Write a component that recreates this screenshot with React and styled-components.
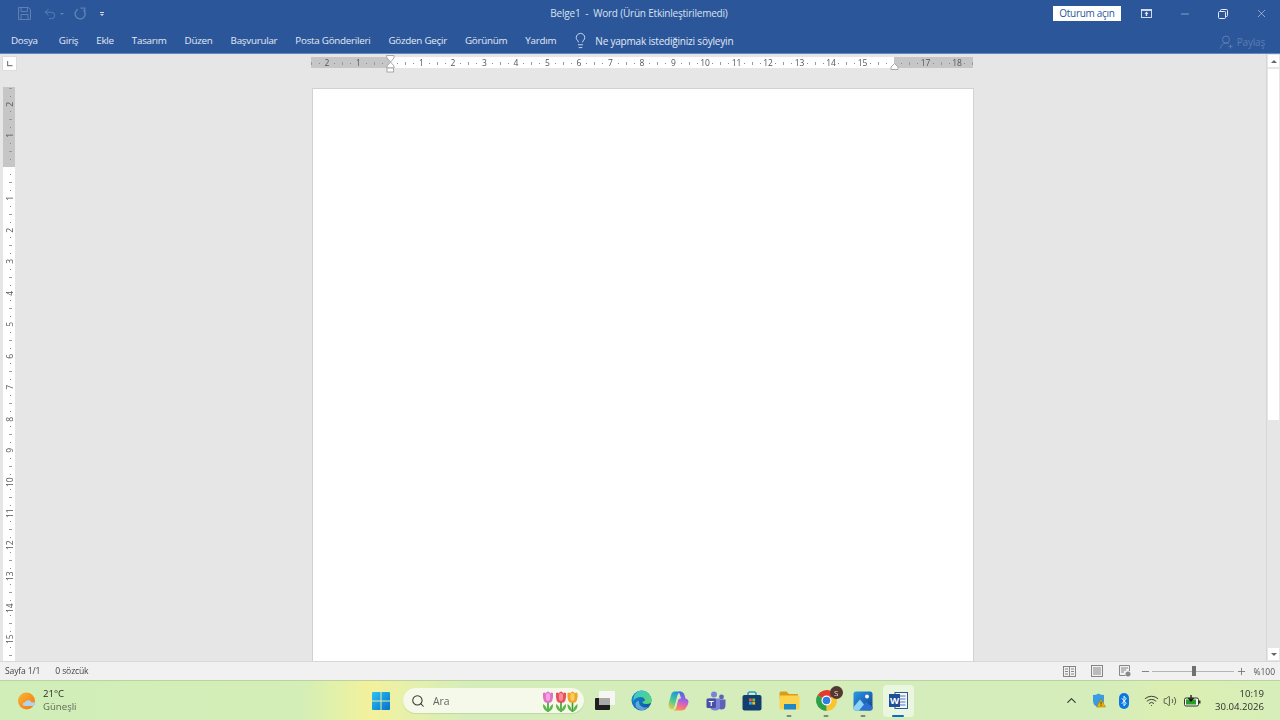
import React from "react";
import styled, { createGlobalStyle } from "styled-components";
import { ChevronUp, Lightbulb, Minus, Plus, Search, Undo2, Volume2, Wifi, X } from "lucide-react";

const GlobalStyle = createGlobalStyle`
  html, body {
    margin: 0;
    padding: 0;
    background: #e6e6e6;
  }
  * {
    box-sizing: border-box;
  }
`;

const STEP = 7.875;

const Screen = styled.div`
  width: 1280px;
  height: 720px;
  display: flex;
  flex-direction: column;
  overflow: hidden;
  font-family: "Open Sans", "Noto Sans", sans-serif;
  filter: blur(0.3px);
`;

const TitleBar = styled.div`
  height: 27px;
  flex: none;
  background: #2b579a;
  display: grid;
  grid-template-columns: 1fr auto 1fr;
  align-items: center;
  color: #dfe7f3;
`;

const QuickAccess = styled.div`
  display: flex;
  align-items: center;
  padding-left: 18px;
  color: #5f80b3;
`;

const QuickButton = styled.span`
  display: flex;
  margin-right: ${(p) => p.$gap || 0}px;
`;

const Caret = styled.span`
  width: 0;
  height: 0;
  border-left: 2px solid transparent;
  border-right: 2px solid transparent;
  border-top: 2px solid ${(p) => p.$color || "#6283b5"};
`;

const CustomizeMark = styled.span`
  width: 4px;
  display: flex;
  flex-direction: column;
  gap: 1px;
  align-items: center;

  &::before {
    content: "";
    width: 4px;
    height: 1px;
    background: #d4dcea;
  }
`;

const DocTitle = styled.div`
  font-size: 10px;
  letter-spacing: -0.2px;
  white-space: pre;
  color: #d9e1ef;
  margin: -1px 0 0 -2px;
`;

const WindowControls = styled.div`
  display: flex;
  align-items: center;
  justify-content: flex-end;
`;

const SignIn = styled.button`
  width: 68px;
  height: 15px;
  margin-right: 20px;
  padding: 0;
  border: 0;
  background: #fff;
  color: #2b579a;
  font: 10px "Open Sans", sans-serif;
  letter-spacing: -0.3px;
  line-height: 15px;
`;

const WindowButton = styled.span`
  width: ${(p) => p.$w}px;
  margin-left: ${(p) => p.$before || 0}px;
  display: flex;
  justify-content: center;
  color: #e4eaf4;
`;

const TabBar = styled.div`
  height: 27px;
  flex: none;
  background: #2b579a;
  border-bottom: 1px solid #6488bd;
  display: flex;
  align-items: center;
  gap: 18px;
  padding: 1px 15px 0 11px;
`;

const Tab = styled.span`
  font-size: 9.8px;
  letter-spacing: -0.25px;
  color: #e3e9f4;
  white-space: nowrap;
  margin-right: ${(p) => p.$after || 0}px;
`;

const TellMe = styled.div`
  display: flex;
  align-items: center;
  gap: 6px;
  color: #e3e9f4;
  font-size: 10px;
  letter-spacing: -0.2px;
  margin-left: -2px;
`;

const Share = styled.div`
  margin-left: auto;
  display: flex;
  align-items: center;
  gap: 3px;
  color: #5a7cb0;
  font-size: 10px;
  letter-spacing: -0.2px;
  padding-top: 3px;
`;

const Workspace = styled.div`
  flex: 1;
  min-height: 0;
  display: flex;
  background: #e6e6e6;
`;

const LeftColumn = styled.div`
  width: 18px;
  flex: none;
  padding-left: 3px;
`;

const Corner = styled.div`
  width: 13px;
  height: 13px;
  margin-top: 3px;
  background: #fff;
  box-shadow: 0 0 0 1px #dcdcdc;
  display: flex;
  align-items: center;
  justify-content: center;
`;

const Center = styled.div`
  flex: 1;
  min-width: 0;
  display: flex;
  flex-direction: column;
  align-items: center;
`;

const Ruler = styled.div`
  position: relative;
  flex: none;
  width: ${(p) => (p.$vertical ? "12px" : "662px")};
  height: ${(p) => (p.$vertical ? "574px" : "11px")};
  margin-top: ${(p) => (p.$vertical ? "17px" : "3px")};
  overflow: ${(p) => (p.$vertical ? "hidden" : "visible")};
  background: ${(p) =>
    p.$vertical
      ? "linear-gradient(to bottom, #c6c6c6 80px, #fff 80px)"
      : "linear-gradient(to right, #c6c6c6 79px, #fff 79px, #fff 583px, #c6c6c6 583px)"};
`;

const RulerClip = styled.div`
  width: 100%;
  height: 100%;
  overflow: hidden;
`;

const Scale = styled.div`
  display: flex;
  flex-direction: ${(p) => (p.$vertical ? "column" : "row")};
  margin-left: ${(p) => (p.$vertical ? "1px" : "-3.69px")};
  margin-top: ${(p) => (p.$vertical ? "-2.69px" : "1px")};
  width: ${(p) => (p.$vertical ? "12px" : "auto")};
  height: ${(p) => (p.$vertical ? "auto" : "11px")};
`;

const Slot = styled.div`
  flex: none;
  width: ${(p) => (p.$vertical ? "12px" : `${STEP}px`)};
  height: ${(p) => (p.$vertical ? `${STEP}px` : "11px")};
  display: flex;
  align-items: center;
  justify-content: center;
`;

const Dot = styled.i`
  width: 1px;
  height: 1px;
  background: #8b8b8b;
`;

const Tick = styled.i`
  width: ${(p) => (p.$vertical ? "3px" : "1px")};
  height: ${(p) => (p.$vertical ? "1px" : "3px")};
  background: #9a9a9a;
`;

const Num = styled.span`
  font-size: 8.5px;
  line-height: 1;
  color: #555;
  white-space: nowrap;
  transform: ${(p) => (p.$vertical ? "rotate(-90deg)" : "none")};
`;

const IndentMark = styled.svg`
  position: absolute;
  left: ${(p) => p.$left}px;
  top: ${(p) => p.$top}px;
`;

const Page = styled.div`
  flex: 1;
  width: 662px;
  margin: 20px 0 0 2px;
  background: #fff;
  border: 1px solid #d2d2d2;
  border-bottom: 0;
`;

const ScrollBar = styled.div`
  width: 14px;
  flex: none;
  padding: 1px;
  display: flex;
  flex-direction: column;
  border-left: 1px solid #d6d6d6;
`;

const ScrollArrow = styled.div`
  height: 12px;
  flex: none;
  background: #fff;
  display: flex;
  align-items: center;
  justify-content: center;

  &::before {
    content: "";
    border-left: 3.5px solid transparent;
    border-right: 3.5px solid transparent;
    border-${(p) => (p.$down ? "top" : "bottom")}: 3.5px solid #666;
  }
`;

const ScrollThumb = styled.div`
  height: 351px;
  margin-top: 2px;
  flex: none;
  background: #fff;
`;

const ScrollSpace = styled.div`
  flex: 1;
`;

const StatusBar = styled.div`
  height: 19px;
  flex: none;
  background: #f1f1f1;
  border-top: 1px solid #d8d8d8;
  display: flex;
  align-items: center;
  font-size: 8.6px;
  color: #444;
  padding: 0 5px;
`;

const StatusText = styled.span`
  margin-right: ${(p) => p.$after || 0}px;
  letter-spacing: -0.15px;
  white-space: nowrap;
`;

const StatusRight = styled.div`
  margin-left: auto;
  display: flex;
  align-items: center;
  color: #7a7a7a;
`;

const ViewIcon = styled.span`
  display: flex;
  margin-right: ${(p) => p.$after}px;
`;

const ZoomTrack = styled.div`
  position: relative;
  width: 82px;
  height: 1px;
  margin: 0 2px 0 1px;
  background: #b4b4b4;
`;

const ZoomThumb = styled.span`
  position: absolute;
  left: 40px;
  top: -5px;
  width: 4px;
  height: 10px;
  background: #707070;
`;

const ZoomValue = styled.span`
  font-size: 8.5px;
  margin-left: 6px;
  color: #555;
`;

const Taskbar = styled.div`
  height: 40px;
  flex: none;
  display: grid;
  grid-template-columns: 363px auto 1fr;
  align-items: center;
  border-top: 1px solid #b9d3a2;
  background: linear-gradient(
    to right,
    #d2eeb8 0,
    #d3eeb7 300px,
    #e2f1a9 335px,
    #f3f19c 372px,
    #e6f0ab 410px,
    #d5edbb 470px,
    #d5edbb 1100px,
    #dcefb2 1170px,
    #d6eeb9 1280px
  );
`;

const Weather = styled.div`
  display: flex;
  align-items: center;
  gap: 6px;
  padding-left: 17px;
`;

const WeatherText = styled.div`
  display: flex;
  flex-direction: column;
  font-size: 9.6px;
  line-height: 13px;
  color: #2b2b2b;
  margin-top: -2px;
`;

const WeatherSub = styled.span`
  color: #606a58;
`;

const Apps = styled.div`
  display: flex;
  align-items: center;
`;

const AppSlot = styled.div`
  position: relative;
  width: ${(p) => (p.$active ? "31px" : "36.9px")};
  margin-left: ${(p) => (p.$active ? "1px" : "0")};
  height: 32px;
  flex: none;
  display: flex;
  align-items: center;
  justify-content: center;
  border-radius: 4px;
  background: ${(p) => (p.$active ? "rgba(255,255,255,0.5)" : "transparent")};

  &::after {
    content: "";
    display: ${(p) => (p.$running || p.$active ? "block" : "none")};
    position: absolute;
    bottom: 0;
    left: 50%;
    transform: translateX(-50%);
    width: ${(p) => (p.$active ? "12px" : "5px")};
    height: 2px;
    border-radius: 1px;
    background: ${(p) => (p.$active ? "#0a6cc4" : "#7d8a78")};
  }
`;

const SearchBox = styled.div`
  width: 181px;
  height: 25px;
  margin: 0 2.5px 0 3px;
  flex: none;
  border-radius: 13px;
  background: #f4f9e9;
  box-shadow: 0 1px 1px rgba(90, 110, 70, 0.18);
  display: flex;
  align-items: center;
  padding: 0 4px 0 8px;
  color: #333;
`;

const SearchLabel = styled.span`
  font-size: 10.4px;
  color: #666;
  margin-left: 8px;
`;

const Tulips = styled.svg`
  margin-left: auto;
`;

const Badge = styled.span`
  position: absolute;
  left: 22px;
  top: 1px;
  width: 13px;
  height: 13px;
  border-radius: 50%;
  background: #54372f;
  color: #e8dcd6;
  font-size: 8px;
  line-height: 13px;
  text-align: center;
`;

const Tray = styled.div`
  display: flex;
  align-items: center;
  padding-right: 16px;
  color: #333;
`;

const TrayIcon = styled.span`
  display: flex;
  margin-left: ${(p) => p.$before}px;
`;

const Clock = styled.div`
  margin-left: auto;
  margin-top: -2px;
  display: flex;
  flex-direction: column;
  align-items: flex-end;
  font-size: 9.6px;
  line-height: 13px;
  color: #2f2f2f;
`;

const SaveIcon = () => (
  <svg width="13" height="13" viewBox="0 0 13 13" fill="none" stroke="currentColor">
    <path d="M0.5 0.5 H10.5 L12.5 2.5 V12.5 H0.5 Z" />
    <path d="M3 0.5 V4.5 H9.5 V0.5 M3 12.5 V7.5 H10 V12.5" />
  </svg>
);

const RepeatIcon = () => (
  <svg width="12" height="13" viewBox="0 0 12 13" fill="none" stroke="currentColor" strokeWidth="1.5">
    <path d="M4 2.4 A5 5 0 1 0 9.5 3.2" />
    <path d="M6.5 1.2 H10.8 V5.2" strokeWidth="1.2" />
  </svg>
);

const RibbonIcon = () => (
  <svg width="11" height="9" viewBox="0 0 11 9">
    <rect x="0.5" y="0.5" width="10" height="8" fill="none" stroke="currentColor" strokeWidth="0.9" />
    <path d="M0.5 1.5 H10.5" stroke="currentColor" strokeWidth="0.9" />
    <path d="M5.5 2.5 L7.5 4.7 H6.2 V7 H4.8 V4.7 H3.5 Z" fill="currentColor" />
  </svg>
);

const RestoreIcon = () => (
  <svg width="10" height="10" viewBox="0 0 10 10" fill="none" stroke="currentColor">
    <rect x="0.5" y="2.5" width="7" height="7" rx="1" />
    <path d="M2.5 2.5 V1.5 Q2.5 0.5 3.5 0.5 H8.5 Q9.5 0.5 9.5 1.5 V6.5 Q9.5 7.5 8.5 7.5 H7.5" />
  </svg>
);

const ShareIcon = () => (
  <svg width="14" height="14" viewBox="0 0 14 14" fill="none" stroke="currentColor">
    <circle cx="6" cy="4.5" r="3.5" />
    <path d="M0.5 13.5 Q1 8.5 6 8 Q8 8 9 9" />
    <path d="M10.5 9.5 V13.5 M8.5 11.5 H12.5" />
  </svg>
);

const TabStopIcon = () => (
  <svg width="7" height="7" viewBox="0 0 7 7">
    <path d="M1 1 H2.2 V5 H6.5 V6.2 H1 Z" fill="#808080" />
  </svg>
);

const ReadIcon = () => (
  <svg width="13" height="11" viewBox="0 0 13 11" fill="none" stroke="currentColor" strokeWidth="0.9">
    <rect x="0.5" y="0.5" width="12" height="10" />
    <path d="M6.5 0.5 V10.5 M2 3 H5 M2 5.5 H5 M2 8 H5 M8 3 H11 M8 5.5 H11 M8 8 H11" />
  </svg>
);

const PrintIcon = () => (
  <svg width="12" height="12" viewBox="0 0 12 12" fill="none" stroke="currentColor" strokeWidth="0.9">
    <rect x="0.5" y="0.5" width="11" height="11" />
    <path d="M2 3 H10 M2 5 H10 M2 7 H10 M2 9 H10" />
  </svg>
);

const WebIcon = () => (
  <svg width="12" height="12" viewBox="0 0 12 12" fill="none" stroke="currentColor" strokeWidth="0.9">
    <path d="M6.5 10.5 H0.5 V0.5 H10.5 V6" />
    <path d="M2 3 H9 M2 5 H7 M2 7 H5" />
    <circle cx="9" cy="9" r="2.5" fill="#888" stroke="none" />
  </svg>
);

const SunCloud = () => (
  <svg width="20" height="20" viewBox="0 0 20 20">
    <defs>
      <linearGradient id="sun" x1="0" y1="0" x2="1" y2="1">
        <stop offset="0" stopColor="#fbb433" />
        <stop offset="1" stopColor="#f0780f" />
      </linearGradient>
    </defs>
    <circle cx="9.5" cy="10" r="8.5" fill="url(#sun)" />
    <path d="M8 15 Q5.5 15 5.8 12.8 Q6 11.2 8 11.2 Q9 8.8 11.8 9.2 Q14.2 9.6 14.4 11.4 Q18.5 11 18.6 13.2 Q18.6 15 16.5 15 Z" fill="#b2d3f0" />
  </svg>
);

const StartLogo = () => (
  <svg width="20" height="20" viewBox="0 0 20 20">
    <defs>
      <linearGradient id="win" x1="0" y1="0" x2="1" y2="1">
        <stop offset="0" stopColor="#2cc3f5" />
        <stop offset="1" stopColor="#0670c9" />
      </linearGradient>
    </defs>
    <path d="M1 2 Q1 1 2 1 H9.5 V9.5 H1 Z M10.5 1 H18 Q19 1 19 2 V9.5 H10.5 Z M1 10.5 H9.5 V19 H2 Q1 19 1 18 Z M10.5 10.5 H19 V18 Q19 19 18 19 H10.5 Z" fill="url(#win)" />
  </svg>
);

const TulipSet = () => (
  <Tulips width="40" height="24" viewBox="0 0 40 24">
    {[
      [8, 5, "#e070c8", "#f4a2e2"],
      [21, 5, "#e64f60", "#f78c96"],
      [32.5, 5, "#efa42a", "#f9cd58"],
    ].map(([x, y, a, b]) => (
      <g key={x}>
        <path d={`M${x} ${y + 8} V23`} stroke="#3f9a35" strokeWidth="1.6" />
        <path d={`M${x} 23 Q${x - 5.5} 21 ${x - 5} 15 Q${x - 1.5} 17 ${x} 23 Q${x + 1.5} 17 ${x + 5} 15 Q${x + 5.5} 21 ${x} 23 Z`} fill="#5cb845" />
        <path d={`M${x - 5} ${y - 1} Q${x - 3} ${y - 2} ${x - 2.5} ${y - 0.5} Q${x - 1} ${y - 2.5} ${x} ${y - 2.5} Q${x + 1} ${y - 2.5} ${x + 2.5} ${y - 0.5} Q${x + 3} ${y - 2} ${x + 5} ${y - 1} Q${x + 6} ${y + 9} ${x} ${y + 9} Q${x - 6} ${y + 9} ${x - 5} ${y - 1} Z`} fill={a} />
        <ellipse cx={x} cy={y + 3} rx="2.2" ry="4" fill={b} />
      </g>
    ))}
  </Tulips>
);

const TaskView = () => (
  <svg width="20" height="19" viewBox="0 0 20 19">
    <rect x="0" y="7" width="15" height="12" rx="1" fill="#1f1f1f" />
    <rect x="4" y="0" width="16" height="14" rx="1" fill="#f6f6f4" />
    <rect x="4" y="7" width="11" height="7" fill="#a9a9a7" />
  </svg>
);

const EdgeIcon = () => (
  <svg width="21" height="21" viewBox="0 0 21 21">
    <defs>
      <linearGradient id="edgeA" x1="0" y1="0" x2="1" y2="1">
        <stop offset="0" stopColor="#1a8fd8" />
        <stop offset="1" stopColor="#0c4f9e" />
      </linearGradient>
      <linearGradient id="edgeB" x1="0" y1="0" x2="1" y2="1">
        <stop offset="0" stopColor="#35c6d8" />
        <stop offset="1" stopColor="#5fd86a" />
      </linearGradient>
    </defs>
    <circle cx="10.5" cy="10.5" r="10" fill="url(#edgeA)" />
    <path d="M10.5 0.5 A10 10 0 0 1 20.5 11.5 Q20 14 15 14 Q11 14 11.5 11.5 Q13 12 14 10 Q13 7 9.5 7 Q5 7 2 11 Q3 0.5 10.5 0.5 Z" fill="url(#edgeB)" />
    <path d="M8 11 Q7.5 16 13 17.5 Q16 18 18 16 Q14 21 9.5 20 Q4 18.5 4.5 13.5 Q5.5 10.5 8 11 Z" fill="#9fd8f5" opacity="0.55" />
  </svg>
);

const CopilotIcon = () => (
  <svg width="21" height="20" viewBox="0 0 21 20">
    <defs>
      <linearGradient id="copA" x1="0.6" y1="0" x2="0.2" y2="1">
        <stop offset="0" stopColor="#1f8fe0" />
        <stop offset="0.5" stopColor="#45c89a" />
        <stop offset="1" stopColor="#e8d040" />
      </linearGradient>
      <linearGradient id="copB" x1="0.6" y1="0" x2="0.4" y2="1">
        <stop offset="0" stopColor="#3a6fe0" />
        <stop offset="0.45" stopColor="#a860e0" />
        <stop offset="0.75" stopColor="#f06a9a" />
        <stop offset="1" stopColor="#f59a40" />
      </linearGradient>
    </defs>
    <path d="M6.5 0.5 H13 Q10.5 1 9.5 4 L6.5 15.5 Q5.5 19.5 2.5 18 Q0 16 0.8 12 L3 4 Q4 0.5 6.5 0.5 Z" fill="url(#copA)" />
    <path d="M12 0.5 Q15.5 0.5 16.5 4 L17.5 7.5 Q20.5 8 20.5 11 Q20 14 18.5 16 Q17 19.5 13.5 19.5 H5 Q8 19 8.5 15.5 L10 9.5 Q10.5 7 13 7.5 L12 4 Q11.5 1.5 10 1 Z" fill="url(#copB)" />
  </svg>
);

const TeamsIcon = () => (
  <svg width="20" height="20" viewBox="0 0 20 20">
    <circle cx="8" cy="3.5" r="3" fill="#7b83d8" />
    <circle cx="15.5" cy="6" r="2.4" fill="#5b62b8" />
    <path d="M12 8.5 H19.5 V14 Q19.5 18.5 15.5 18.5 Q12 18.5 12 15 Z" fill="#5b62b8" />
    <path d="M3 7.5 H14 V15 Q14 19.5 9 19.5 Q4.5 19.5 3.5 15 Z" fill="#7b83d8" />
    <rect x="0.5" y="7.5" width="9.5" height="9.5" rx="1.2" fill="#4a50a8" />
    <path d="M2.8 10 H7.7 V11 H5.8 V15 H4.7 V11 H2.8 Z" fill="#fff" />
  </svg>
);

const StoreIcon = () => (
  <svg width="20" height="20" viewBox="0 0 20 20">
    <path d="M6 5 V3 Q6 1 8 1 H12 Q14 1 14 3 V5" fill="none" stroke="#2f9bd4" strokeWidth="1.6" />
    <rect x="0.5" y="4" width="19" height="15.5" rx="2" fill="#123f6d" />
    <rect x="7" y="7.5" width="2.8" height="2.8" fill="#ef5a30" />
    <rect x="10.3" y="7.5" width="2.8" height="2.8" fill="#7fbb3a" />
    <rect x="7" y="10.8" width="2.8" height="2.8" fill="#2ea3e8" />
    <rect x="10.3" y="10.8" width="2.8" height="2.8" fill="#f7b92a" />
  </svg>
);

const FolderIcon = () => (
  <svg width="21" height="19" viewBox="0 0 21 19">
    <path d="M0.5 2 Q0.5 0.5 2 0.5 H7.5 L10 3 H19 V8 H0.5 Z" fill="#dd9c18" />
    <path d="M0.5 4.5 H19 Q20.5 4.5 20.5 6 V17 Q20.5 18.5 19 18.5 H2 Q0.5 18.5 0.5 17 Z" fill="#fbd34c" />
    <rect x="5" y="13" width="12" height="5.5" fill="#1d87cc" />
  </svg>
);

const ChromeIcon = () => (
  <svg width="21" height="21" viewBox="0 0 21 21">
    <g fill="none" strokeWidth="6" transform="rotate(-150 10.5 10.5)">
      <circle cx="10.5" cy="10.5" r="7.4" stroke="#e33b2e" pathLength="3" strokeDasharray="1 2" />
      <circle cx="10.5" cy="10.5" r="7.4" stroke="#f9c42d" pathLength="3" strokeDasharray="1 2" strokeDashoffset="-1" />
      <circle cx="10.5" cy="10.5" r="7.4" stroke="#2fa04a" pathLength="3" strokeDasharray="1 2" strokeDashoffset="-2" />
    </g>
    <circle cx="10.5" cy="10.5" r="5" fill="#fff" />
    <circle cx="10.5" cy="10.5" r="3.8" fill="#2d7ee6" />
  </svg>
);

const PhotosIcon = () => (
  <svg width="20" height="20" viewBox="0 0 20 20">
    <defs>
      <linearGradient id="photo" x1="0" y1="0" x2="1" y2="1">
        <stop offset="0" stopColor="#2a9ce8" />
        <stop offset="1" stopColor="#123e8c" />
      </linearGradient>
    </defs>
    <rect x="0.5" y="0.5" width="19" height="19" rx="2.5" fill="url(#photo)" />
    <circle cx="14" cy="5.5" r="2" fill="#f2f7ff" />
    <path d="M0.5 16 L7 8.5 L14 17 Q15 19.5 12 19.5 H3 Q0.5 19.5 0.5 16 Z" fill="#8fd3f5" />
    <path d="M6 19.5 L13 11 L19.5 16 V17 Q19.5 19.5 17 19.5 Z" fill="#2f6fd0" />
  </svg>
);

const WordIcon = () => (
  <svg width="19" height="17" viewBox="0 0 19 17">
    <rect x="6" y="0.5" width="12.5" height="16" fill="#f4f6fa" stroke="#2b579a" />
    <path d="M10.5 4 H16.5 M10.5 7 H16.5 M10.5 10 H16.5 M10.5 13 H16.5" stroke="#4a78bb" />
    <rect x="0" y="2" width="11" height="13" fill="#1f4e97" />
    <text x="5.5" y="12" textAnchor="middle" fontSize="9.5" fontWeight="700" fill="#fff" fontFamily="Open Sans, sans-serif">
      W
    </text>
  </svg>
);

const ShieldIcon = () => (
  <svg width="14" height="15" viewBox="0 0 14 15">
    <path d="M6.5 0.5 Q9 2 12 2 V8 Q12 12.5 6.5 14.5 Q1 12.5 1 8 V2 Q4 2 6.5 0.5 Z" fill="#3a9ce0" />
    <path d="M9 6 L13.5 14 H4.5 Z" fill="#f4b400" stroke="#8a6200" strokeWidth="0.4" />
    <rect x="8.6" y="8.5" width="0.9" height="3" fill="#333" />
    <rect x="8.6" y="12" width="0.9" height="0.9" fill="#333" />
  </svg>
);

const BluetoothIcon = () => (
  <svg width="10" height="16" viewBox="0 0 10 16">
    <rect width="10" height="16" rx="5" fill="#0a78e0" />
    <path d="M2.7 5.2 L7.2 10.2 L5 12.8 V3.2 L7.2 5.8 L2.7 10.8" fill="none" stroke="#fff" strokeWidth="0.9" />
  </svg>
);

const BatteryIcon = () => (
  <svg width="17" height="13" viewBox="0 0 17 13">
    <rect x="0.5" y="4" width="14" height="8" rx="1.5" fill="#f3f8e8" stroke="#333" />
    <rect x="15" y="6.5" width="1.5" height="3" fill="#333" />
    <rect x="2" y="5.5" width="10" height="5" fill="#2a9a2a" />
    <path d="M7 1 V6.5 M4.5 4 L7 7 L9.5 4" stroke="#111" strokeWidth="1.3" fill="none" />
  </svg>
);

const tabs = ["Giriş", "Ekle", "Tasarım", "Düzen", "Başvurular", "Posta Gönderileri", "Gözden Geçir", "Görünüm", "Yardım"];

const renderMark = (k, vertical) => {
  if (k === 0 || (!vertical && k === 64)) return null;
  if (k % 4 === 0) return <Num $vertical={vertical}>{Math.abs(k / 4)}</Num>;
  if (k % 2 === 0) return <Tick $vertical={vertical} />;
  return <Dot />;
};

const RulerMarks = ({ from, to, vertical }) => {
  const slots = [];
  for (let k = from; k <= to; k++) {
    slots.push(
      <Slot key={k} $vertical={vertical}>
        {renderMark(k, vertical)}
      </Slot>
    );
  }
  return <Scale $vertical={vertical}>{slots}</Scale>;
};

const App = () => {
  return (
    <Screen>
      <GlobalStyle />
      <TitleBar>
        <QuickAccess>
          <QuickButton $gap={12}>
            <SaveIcon />
          </QuickButton>
          <QuickButton $gap={3}>
            <Undo2 size={14} strokeWidth={1.6} />
          </QuickButton>
          <QuickButton $gap={10}>
            <Caret />
          </QuickButton>
          <QuickButton $gap={14}>
            <RepeatIcon />
          </QuickButton>
          <CustomizeMark>
            <Caret $color="#d4dcea" />
          </CustomizeMark>
        </QuickAccess>
        <DocTitle>{"Belge1  -  Word (Ürün Etkinleştirilemedi)"}</DocTitle>
        <WindowControls>
          <SignIn>Oturum açın</SignIn>
          <WindowButton $w={11}>
            <RibbonIcon />
          </WindowButton>
          <WindowButton $w={38} $before={14}>
            <Minus size={12} strokeWidth={1} />
          </WindowButton>
          <WindowButton $w={38}>
            <RestoreIcon />
          </WindowButton>
          <WindowButton $w={38}>
            <X size={13} strokeWidth={1} />
          </WindowButton>
        </WindowControls>
      </TitleBar>

      <TabBar>
        <Tab $after={3}>Dosya</Tab>
        {tabs.map((name) => (
          <Tab key={name}>{name}</Tab>
        ))}
        <TellMe>
          <Lightbulb size={17} strokeWidth={1.2} />
          Ne yapmak istediğinizi söyleyin
        </TellMe>
        <Share>
          <ShareIcon />
          Paylaş
        </Share>
      </TabBar>

      <Workspace>
        <LeftColumn>
          <Corner>
            <TabStopIcon />
          </Corner>
          <Ruler $vertical>
            <RulerMarks from={-10} to={62} vertical />
          </Ruler>
        </LeftColumn>
        <Center>
          <Ruler>
            <RulerClip>
              <RulerMarks from={-10} to={74} />
            </RulerClip>
            <IndentMark $left={75} $top={-2} width="9" height="19" viewBox="0 0 9 19">
              <path d="M0.5 0.5 H8 V3 L4.5 7 L1 3 Z M4.5 7 L8 11 V13 H1 V11 Z" fill="#fff" stroke="#a8a8a8" />
              <rect x="1" y="13" width="6.5" height="4" fill="#fff" stroke="#a8a8a8" />
            </IndentMark>
            <IndentMark $left={579} $top={6} width="9" height="7" viewBox="0 0 9 7">
              <path d="M4.5 0.5 L8 4 V6.5 H1 V4 Z" fill="#fff" stroke="#a8a8a8" />
            </IndentMark>
          </Ruler>
          <Page />
        </Center>
        <ScrollBar>
          <ScrollArrow />
          <ScrollThumb />
          <ScrollSpace />
          <ScrollArrow $down />
        </ScrollBar>
      </Workspace>

      <StatusBar>
        <StatusText $after={15}>Sayfa 1/1</StatusText>
        <StatusText>0 sözcük</StatusText>
        <StatusRight>
          <ViewIcon $after={15}>
            <ReadIcon />
          </ViewIcon>
          <ViewIcon $after={16}>
            <PrintIcon />
          </ViewIcon>
          <ViewIcon $after={9}>
            <WebIcon />
          </ViewIcon>
          <Minus size={11} strokeWidth={2} />
          <ZoomTrack>
            <ZoomThumb />
          </ZoomTrack>
          <Plus size={11} strokeWidth={2} />
          <ZoomValue>%100</ZoomValue>
        </StatusRight>
      </StatusBar>

      <Taskbar>
        <Weather>
          <SunCloud />
          <WeatherText>
            <span>21°C</span>
            <WeatherSub>Güneşli</WeatherSub>
          </WeatherText>
        </Weather>
        <Apps>
          <AppSlot>
            <StartLogo />
          </AppSlot>
          <SearchBox>
            <Search size={14} strokeWidth={1.8} />
            <SearchLabel>Ara</SearchLabel>
            <TulipSet />
          </SearchBox>
          <AppSlot>
            <TaskView />
          </AppSlot>
          <AppSlot>
            <EdgeIcon />
          </AppSlot>
          <AppSlot>
            <CopilotIcon />
          </AppSlot>
          <AppSlot>
            <TeamsIcon />
          </AppSlot>
          <AppSlot>
            <StoreIcon />
          </AppSlot>
          <AppSlot $running>
            <FolderIcon />
          </AppSlot>
          <AppSlot $running>
            <ChromeIcon />
            <Badge>S</Badge>
          </AppSlot>
          <AppSlot $running>
            <PhotosIcon />
          </AppSlot>
          <AppSlot $active>
            <WordIcon />
          </AppSlot>
        </Apps>
        <Tray>
          <TrayIcon $before={150}>
            <ChevronUp size={15} strokeWidth={1.7} />
          </TrayIcon>
          <TrayIcon $before={13}>
            <ShieldIcon />
          </TrayIcon>
          <TrayIcon $before={13}>
            <BluetoothIcon />
          </TrayIcon>
          <TrayIcon $before={15}>
            <Wifi size={15} strokeWidth={1.5} />
          </TrayIcon>
          <TrayIcon $before={4}>
            <Volume2 size={14} strokeWidth={1.3} />
          </TrayIcon>
          <TrayIcon $before={7}>
            <BatteryIcon />
          </TrayIcon>
          <Clock>
            <span>10:19</span>
            <span>30.04.2026</span>
          </Clock>
        </Tray>
      </Taskbar>
    </Screen>
  );
};

export default App;
